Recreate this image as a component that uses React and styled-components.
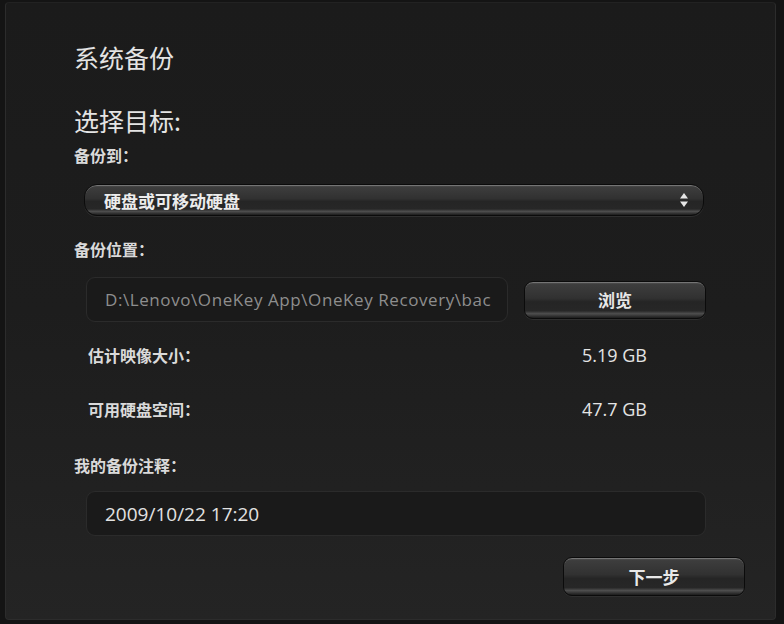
import React from 'react';
import styled, { createGlobalStyle } from 'styled-components';

const GlobalStyle = createGlobalStyle`
  html, body {
    margin: 0;
    padding: 0;
    background: #151515;
  }
  body {
    font-family: "Noto Sans CJK SC", "Open Sans", sans-serif;
  }
`;

const Screen = styled.div`
  width: 784px;
  height: 624px;
  box-sizing: border-box;
  padding: 2px 8px 4px 5px;
  background: #141414;
  overflow: hidden;
`;

const Panel = styled.div`
  box-sizing: border-box;
  height: 100%;
  display: flex;
  flex-direction: column;
  padding: 0 30px 0 68px;
  border: 1px solid #2c2c2c;
  border-top-color: #222;
  border-radius: 4px;
  background: linear-gradient(to bottom, #1b1b1b 0%, #1d1d1d 50%, #242424 100%);
`;

const Title = styled.h1`
  margin: ${({ top }) => top}px 0 0;
  font-size: 25px;
  font-weight: 400;
  line-height: 32px;
  color: #e4e4e4;
  font-family: "Noto Sans CJK SC", sans-serif;
`;

const Label = styled.div`
  margin: ${({ top }) => top}px 0 0 ${({ indent }) => indent || 0}px;
  font-size: 16px;
  font-weight: 700;
  line-height: 20px;
  color: #dadada;
  font-family: "Noto Sans CJK SC", sans-serif;
`;

const gloss = `
  background: linear-gradient(
    to bottom,
    #585858 0%,
    #3d3d3d 7%,
    #313131 45%,
    #252525 55%,
    #272727 80%,
    #4e4e4e 88%,
    #2c2c2c 96%,
    #1c1c1c 100%
  );
  border: 1px solid #0b0b0b;
  box-shadow: 0 1px 0 #2e2e2e, inset 0 1px 0 rgba(255, 255, 255, 0.2);
`;

const Select = styled.div`
  ${gloss}
  margin: 19px 0 0 10px;
  width: 620px;
  height: 32px;
  box-sizing: border-box;
  border-radius: 13px;
  display: flex;
  align-items: center;
  justify-content: space-between;
  padding: 0 14px 0 19px;
  color: #ececec;
  font-size: 17px;
  font-weight: 700;
`;

const Arrows = styled.svg`
  width: 10px;
  height: 16px;
`;

const PathRow = styled.div`
  margin: 18px 0 0 12px;
  display: flex;
  align-items: center;
  gap: 16px;
`;

const Field = styled.div`
  box-sizing: border-box;
  width: ${({ w }) => w}px;
  height: 45px;
  padding: 0 12px 0 18px;
  display: flex;
  align-items: center;
  border: 1px solid #2b2b2b;
  border-radius: 9px;
  background: #1a1a1a;
  color: ${({ dim }) => (dim ? '#8e8e8e' : '#e2e2e2')};
  font-family: "Open Sans", sans-serif;
  font-size: ${({ size }) => size}px;
  letter-spacing: ${({ spacing }) => spacing || 0}px;
  white-space: nowrap;
`;

const Button = styled.button`
  ${gloss}
  width: 182px;
  height: ${({ h }) => h}px;
  border-radius: 9px;
  color: #e8e8e8;
  font-family: "Noto Sans CJK SC", sans-serif;
  font-size: 17px;
  font-weight: 700;
  padding: 0;
  cursor: pointer;
`;

const NextButton = styled(Button)`
  align-self: flex-end;
  margin-top: 21px;
`;

const InfoRow = styled.div`
  margin: ${({ top }) => top}px 0 0 14px;
  width: 559px;
  display: flex;
  justify-content: space-between;
  align-items: center;
  height: 20px;
`;

const InfoLabel = styled.span`
  font-size: 16px;
  font-weight: 700;
  color: #dadada;
`;

const InfoValue = styled.span`
  font-family: "Open Sans", sans-serif;
  font-size: 18px;
  color: #e4e4e4;
`;

const NoteField = styled(Field)`
  margin: 16px 0 0 12px;
`;

export default function App() {
  return (
    <>
      <GlobalStyle />
      <Screen>
        <Panel>
          <Title top={38}>系统备份</Title>
          <Title top={31}>选择目标:</Title>
          <Label top={9}>备份到：</Label>
          <Select>
            <span>硬盘或可移动硬盘</span>
            <Arrows viewBox="0 0 10 16">
              <path d="M5 1 L9 6.5 H1 Z" fill="#e6e6e6" />
              <path d="M5 15 L9 9.5 H1 Z" fill="#e6e6e6" />
            </Arrows>
          </Select>
          <Label top={23}>备份位置：</Label>
          <PathRow>
            <Field w={422} size={17} spacing={0.58} dim>
              D:\Lenovo\OneKey App\OneKey Recovery\bac
            </Field>
            <Button h={38}>浏览</Button>
          </PathRow>
          <InfoRow top={23}>
            <InfoLabel>估计映像大小：</InfoLabel>
            <InfoValue>5.19 GB</InfoValue>
          </InfoRow>
          <InfoRow top={34}>
            <InfoLabel>可用硬盘空间：</InfoLabel>
            <InfoValue>47.7 GB</InfoValue>
          </InfoRow>
          <Label top={36}>我的备份注释：</Label>
          <NoteField w={620} size={19}>2009/10/22 17:20</NoteField>
          <NextButton h={39}>下一步</NextButton>
        </Panel>
      </Screen>
    </>
  );
}
